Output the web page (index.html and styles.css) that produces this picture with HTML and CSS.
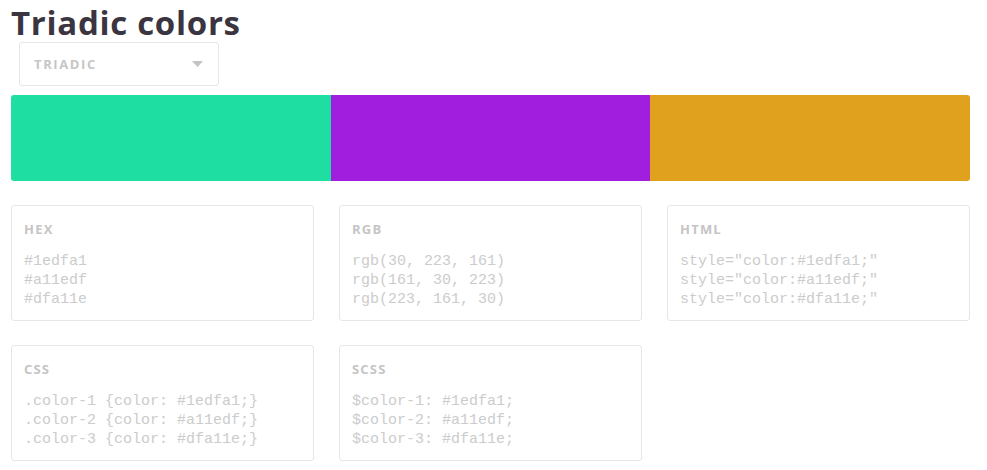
FILE: index.html
```html
<!DOCTYPE html>
<html>
<head>
<meta charset="utf-8">
<link rel="stylesheet" href="styles.css">
</head>
<body>
<div class="page">
  <h1 class="title">Triadic colors</h1>
  <div class="select">
    <span class="select-label">TRIADIC</span>
    <svg class="caret" width="11" height="6" viewBox="0 0 11 6"><path d="M0 0h11L5.5 6z" fill="#c4c4c4"/></svg>
  </div>
  <div class="palette">
    <div class="swatch s1"></div>
    <div class="swatch s2"></div>
    <div class="swatch s3"></div>
  </div>
  <div class="cards">
    <div class="card">
      <div class="card-title">HEX</div>
      <pre class="code">#1edfa1
#a11edf
#dfa11e</pre>
    </div>
    <div class="card">
      <div class="card-title">RGB</div>
      <pre class="code">rgb(30, 223, 161)
rgb(161, 30, 223)
rgb(223, 161, 30)</pre>
    </div>
    <div class="card">
      <div class="card-title">HTML</div>
      <pre class="code">style="color:#1edfa1;"
style="color:#a11edf;"
style="color:#dfa11e;"</pre>
    </div>
    <div class="card">
      <div class="card-title">CSS</div>
      <pre class="code">.color-1 {color: #1edfa1;}
.color-2 {color: #a11edf;}
.color-3 {color: #dfa11e;}</pre>
    </div>
    <div class="card">
      <div class="card-title">SCSS</div>
      <pre class="code">$color-1: #1edfa1;
$color-2: #a11edf;
$color-3: #dfa11e;</pre>
    </div>
  </div>
</div>
</body>
</html>
```

FILE: styles.css
```css
html, body {
  margin: 0;
  padding: 0;
  background: #ffffff;
}
.page {
  width: 959px;
  padding: 0 0 0 11px;
  font-family: "Open Sans", "Liberation Sans", sans-serif;
}
.title {
  margin: 0;
  font-size: 33px;
  line-height: 45px;
  font-weight: 700;
  color: #3b3541;
  letter-spacing: 0.7px;
}
.select {
  margin: -3px 0 0 8px;
  width: 200px;
  height: 44px;
  box-sizing: border-box;
  border: 1px solid #e6e6e6;
  border-radius: 3px;
  display: flex;
  align-items: center;
  justify-content: space-between;
  padding: 0 15px 0 14px;
}
.select-label {
  font-size: 13px;
  font-weight: 700;
  letter-spacing: 1.6px;
  color: #c6c6c6;
}
.palette {
  margin-top: 9px;
  display: flex;
  height: 86px;
  border-radius: 3px;
  overflow: hidden;
}
.swatch { flex: 1; }
.s1 { background: #1edfa1; }
.s2 { background: #a11edf; }
.s3 { background: #dfa11e; }
.cards {
  margin-top: 24px;
  display: grid;
  grid-template-columns: repeat(3, 1fr);
  column-gap: 25px;
  row-gap: 24px;
}
.card {
  height: 116px;
  box-sizing: border-box;
  border: 1px solid #e6e6e6;
  border-radius: 3px;
  padding: 14px 12px 0 12px;
}
.card-title {
  font-size: 13px;
  line-height: 18px;
  font-weight: 700;
  letter-spacing: 1.2px;
  color: #c5c5c5;
}
.code {
  margin: 14px 0 0 0;
  font-family: "Liberation Mono", "Courier New", monospace;
  font-size: 15px;
  line-height: 19px;
  color: #cccccc;
}
```
